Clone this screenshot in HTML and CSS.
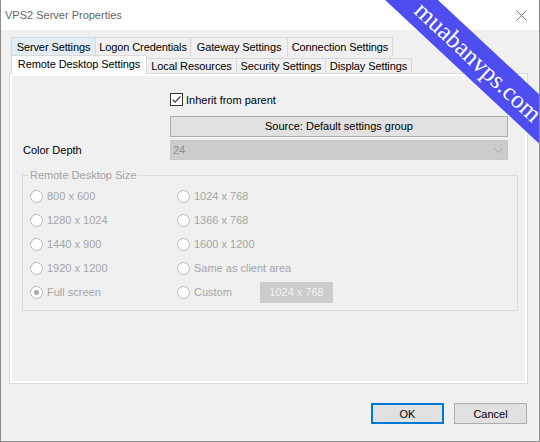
FILE: index.html
```html
<!DOCTYPE html>
<html>
<head>
<meta charset="utf-8">
<link rel="stylesheet" href="styles.css">
</head>
<body>
<div class="window">
  <div class="titlebar">
    <span class="title">VPS2 Server Properties</span>
    <svg class="close" viewBox="0 0 11 11" width="11" height="11"><path d="M0.5 0.5 L10.5 10.5 M10.5 0.5 L0.5 10.5" stroke="#7d7d7d" stroke-width="1" fill="none"/></svg>
  </div>
  <div class="main">
    <div class="tabctl">
      <div class="tabrow row1">
        <div class="tab hover t-server">Server Settings</div>
        <div class="tab t-logon">Logon Credentials</div>
        <div class="tab t-gateway">Gateway Settings</div>
        <div class="tab t-conn">Connection Settings</div>
      </div>
      <div class="tabrow row2">
        <div class="tab sel t-rds">Remote Desktop Settings</div>
        <div class="tab t-local">Local Resources</div>
        <div class="tab t-sec">Security Settings</div>
        <div class="tab t-disp">Display Settings</div>
      </div>
      <div class="panel">
        <div class="page">
          <div class="row r-check">
            <div class="lbl"></div>
            <div class="check">
              <svg class="cbox" viewBox="0 0 13 13" width="13" height="13"><rect x="0.5" y="0.5" width="12" height="12" fill="#fff" stroke="#333"/><path d="M2.6 6.6 L5.1 9.2 L10.4 3.4" stroke="#333" stroke-width="1.2" fill="none"/></svg>
              <span>Inherit from parent</span>
            </div>
          </div>
          <div class="row r-src">
            <div class="lbl"></div>
            <div class="srcbtn">Source: Default settings group</div>
          </div>
          <div class="row r-depth">
            <div class="lbl">Color Depth</div>
            <div class="select">
              <span>24</span>
              <svg viewBox="0 0 9 5" width="9" height="5"><path d="M0.5 0.5 L4.5 4.5 L8.5 0.5" stroke="#a8a8a8" stroke-width="1" fill="none"/></svg>
            </div>
          </div>
          <fieldset class="group">
            <legend>Remote Desktop Size</legend>
            <div class="radios">
              <div class="opt"><span class="radio"></span><span>800 x 600</span></div>
              <div class="opt"><span class="radio"></span><span>1024 x 768</span></div>
              <div class="opt"><span class="radio"></span><span>1280 x 1024</span></div>
              <div class="opt"><span class="radio"></span><span>1366 x 768</span></div>
              <div class="opt"><span class="radio"></span><span>1440 x 900</span></div>
              <div class="opt"><span class="radio"></span><span>1600 x 1200</span></div>
              <div class="opt"><span class="radio"></span><span>1920 x 1200</span></div>
              <div class="opt"><span class="radio"></span><span>Same as client area</span></div>
              <div class="opt"><span class="radio on"></span><span>Full screen</span></div>
              <div class="opt"><span class="radio"></span><span class="custom-lbl">Custom</span><span class="tbox">1024 x 768</span></div>
            </div>
          </fieldset>
        </div>
      </div>
    </div>
    <div class="footer">
      <button class="btn default">OK</button>
      <button class="btn">Cancel</button>
    </div>
  </div>
  <div class="ribbon">muabanvps.com</div>
</div>
</body>
</html>
```
FILE: styles.css
```css
* { box-sizing: border-box; }
html, body { margin: 0; padding: 0; }
body {
  width: 540px;
  height: 442px;
  overflow: hidden;
  font-family: "Liberation Sans", Arial, sans-serif;
  font-size: 11px;
  color: #000;
  background: #f0f0f0;
}
.window {
  position: relative;
  width: 540px;
  height: 442px;
  border: 1px solid #8c8c8c;
  border-top: none;
  background: #f0f0f0;
  overflow: hidden;
}
.titlebar {
  height: 30px;
  background: #fff;
  display: flex;
  align-items: center;
  justify-content: space-between;
  padding: 0 12px 0 4px;
}
.title { color: #666; }
.close { display: block; }

.main { padding: 7px 11px 0 8px; }
.tabctl { width: 519px; }
.tabrow { display: flex; padding-left: 2px; }
.row1 { height: 19px; }
.row2 { height: 17px; }
.tab {
  height: 19px;
  border: 1px solid #d9d9d9;
  border-bottom: none;
  margin-right: -1px;
  background: #f0f0f0;
  display: flex;
  align-items: center;
  justify-content: center;
  white-space: nowrap;
  flex: none;
  letter-spacing: -0.1px;
}
.tab.hover { background: #e3ebf3; }
.row2 .tab { margin-top: 2px; height: 15px; }
.row2 .tab.sel {
  margin-top: -1px;
  height: 19px;
  background: #fff;
  position: relative;
  z-index: 1;
  padding-bottom: 3px;
}
.t-server { width: 85px; }
.t-logon { width: 96px; }
.t-gateway { width: 98px; }
.t-conn { width: 106px; }
.t-rds { width: 136px; }
.t-local { width: 91px; }
.t-sec { width: 90px; }
.t-disp { width: 87px; }

.panel {
  height: 311px;
  border: 1px solid #d9d9d9;
  padding: 2px;
  background: #fff;
}
.page {
  height: 100%;
  background: #f0f0f0;
  padding: 17px 0 0 11px;
}
.row { display: flex; align-items: center; }
.lbl { width: 147px; flex: none; }
.r-check { height: 13px; margin-bottom: 10px; }
.check { display: flex; align-items: center; gap: 3px; }
.cbox { display: block; }
.r-src { margin-bottom: 3px; }
.srcbtn {
  width: 338px;
  height: 21px;
  border: 1px solid #adadad;
  background: #e1e1e1;
  text-align: center;
  line-height: 19px;
}
.select {
  width: 338px;
  height: 20px;
  background: #cccccc;
  border: 1px solid #c8c8c8;
  display: flex;
  align-items: center;
  justify-content: space-between;
  padding: 0 4px 0 2px;
  color: #8f8f8f;
}
.select svg { display: block; }

.group {
  margin: 8px 0 0 -1px;
  width: 496px;
  border: 1px solid #dcdcdc;
  padding: 2px 0 6px 7px;
  min-width: 0;
}
.group legend {
  padding: 0 2px;
  margin-left: -2px;
  color: #a3a3a3;
  line-height: 14px;
}
.radios {
  display: grid;
  grid-template-columns: 147px 1fr;
  grid-auto-rows: 24px;
}
.opt { display: flex; align-items: center; gap: 4px; color: #a6a6a6; }
.radio {
  width: 13px;
  height: 13px;
  border: 1px solid #bababa;
  border-radius: 50%;
  background: #fff;
  flex: none;
  display: flex;
  align-items: center;
  justify-content: center;
}
.radio.on::after {
  content: "";
  width: 5px;
  height: 5px;
  border-radius: 50%;
  background: #a8a8a8;
}
.custom-lbl { width: 62px; flex: none; }
.tbox {
  width: 73px;
  height: 21px;
  background: #cccccc;
  color: #f2f2f2;
  text-align: center;
  line-height: 21px;
}

.footer {
  display: flex;
  justify-content: flex-end;
  gap: 10px;
  margin-top: 19px;
  padding-right: 1px;
}
.btn {
  width: 73px;
  height: 21px;
  border: 1px solid #adadad;
  background: #e1e1e1;
  font: inherit;
  color: #000;
  padding: 0;
  display: flex;
  align-items: center;
  justify-content: center;
}
.btn.default { border: 2px solid #0078d7; }

.ribbon {
  position: absolute;
  left: 317px;
  top: 44px;
  width: 320px;
  height: 36px;
  background: #4d4df0;
  transform: rotate(43deg);
  color: #fff;
  font-family: "Liberation Serif", "Times New Roman", serif;
  font-size: 25px;
  line-height: 35px;
  text-align: center;
  z-index: 5;
}
```
